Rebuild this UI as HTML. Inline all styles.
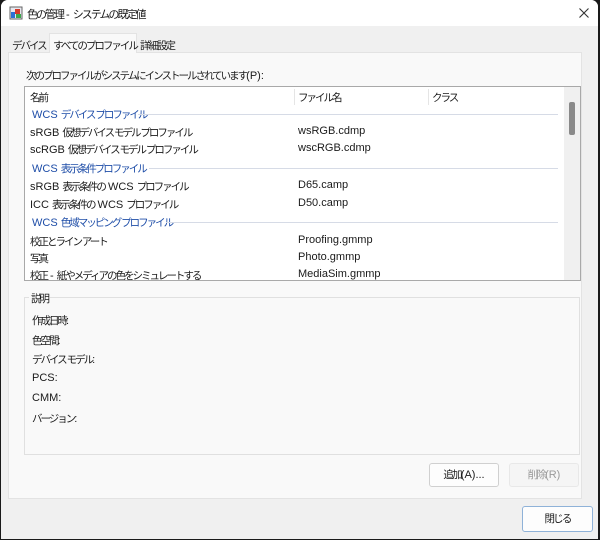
<!DOCTYPE html><html><head><meta charset="utf-8"><style>
*{box-sizing:border-box;margin:0;padding:0}
body{width:600px;height:540px;overflow:hidden;background:#1a1a1a;font-family:"Liberation Sans","Noto Sans CJK JP",sans-serif;font-size:11px;color:#1a1a1a}
.win{position:absolute;left:1px;top:0;width:597px;height:539px;background:#f0f0f0;border-radius:7px 7px 0 0;overflow:hidden}
.title{position:absolute;left:0;top:0;width:100%;height:26px;background:#fff}
.abs{position:absolute;white-space:nowrap;letter-spacing:-2px;font-size:10.5px}
.abs i{font-style:normal;letter-spacing:0;font-size:11px}
.panel{position:absolute;left:7px;top:52px;width:574px;height:447px;background:#f9f9f9;border:1px solid #e3e3e3}
.list{position:absolute;left:23px;top:86px;width:557px;height:195px;background:#fff;border:1px solid #a9a9a9;overflow:hidden}
.grp{color:#1f4ea8}
.line{position:absolute;height:1px;background:#d6dbe6}
.btn{position:absolute;background:#fdfdfd;border:1px solid #d0d0d0;border-radius:3px;text-align:center;line-height:22px;letter-spacing:-1.8px;font-size:10.5px}
.btn i{font-style:normal;letter-spacing:0;font-size:11px}
</style></head><body><div class="win">
<div class="title">
<svg style="position:absolute;left:8px;top:6px" width="14" height="14"><rect x="1" y="1" width="12" height="12" fill="#e8e8f0" stroke="#666"/><rect x="2" y="6" width="4" height="6" fill="#2a6fd6"/><rect x="6" y="3" width="5" height="5" fill="#d63a2a"/><rect x="7" y="8" width="5" height="4" fill="#3aa84a"/></svg>
<div class="abs" style="left:26px;top:6px;font-size:11px">色の管理<i> - </i>システムの既定値</div>
<svg style="position:absolute;left:578px;top:8px" width="10" height="10"><path d="M0.5 0.5L9.5 9.5M9.5 0.5L0.5 9.5" stroke="#333" stroke-width="1.1"/></svg>
</div>
<div class="abs" style="left:11px;top:38px">デバイス</div>
<div class="abs" style="left:48px;top:33px;width:88px;height:20px;background:#f9f9f9;border:1px solid #e3e3e3;border-bottom:none;z-index:2"></div>
<div class="panel"></div>
<div class="abs" style="left:52px;top:38px;z-index:3">すべてのプロファイル</div>
<div class="abs" style="left:139px;top:38px">詳細設定</div>
<div class="abs" style="left:25px;top:68px">次のプロファイルがシステムにインストールされています<i>(P):</i></div>
<div class="list">
<div class="abs" style="left:5px;top:3px">名前</div>
<div class="abs" style="left:269px;top:2px;width:1px;height:16px;background:#e5e5e5"></div>
<div class="abs" style="left:273px;top:3px">ファイル名</div>
<div class="abs" style="left:403px;top:2px;width:1px;height:16px;background:#e5e5e5"></div>
<div class="abs" style="left:407px;top:3px">クラス</div>
<div class="abs grp" style="left:7px;top:20px"><i>WCS </i>デバイス プロファイル</div><div class="line" style="left:113px;top:27px;width:420px"></div>
<div class="abs" style="left:5px;top:38px"><i>sRGB </i>仮想デバイス モデル プロファイル</div><div class="abs" style="left:273px;top:38px"><i>wsRGB.cdmp</i></div>
<div class="abs" style="left:5px;top:55px"><i>scRGB </i>仮想デバイス モデル プロファイル</div><div class="abs" style="left:273px;top:55px"><i>wscRGB.cdmp</i></div>
<div class="abs grp" style="left:7px;top:74px"><i>WCS </i>表示条件プロファイル</div><div class="line" style="left:124px;top:81px;width:409px"></div>
<div class="abs" style="left:5px;top:92px"><i>sRGB </i>表示条件の<i> WCS </i>プロファイル</div><div class="abs" style="left:273px;top:92px"><i>D65.camp</i></div>
<div class="abs" style="left:5px;top:110px"><i>ICC </i>表示条件の<i> WCS </i>プロファイル</div><div class="abs" style="left:273px;top:110px"><i>D50.camp</i></div>
<div class="abs grp" style="left:7px;top:128px"><i>WCS </i>色域マッピング プロファイル</div><div class="line" style="left:141px;top:135px;width:392px"></div>
<div class="abs" style="left:5px;top:147px">校正とライン アート</div><div class="abs" style="left:273px;top:147px"><i>Proofing.gmmp</i></div>
<div class="abs" style="left:5px;top:164px">写真</div><div class="abs" style="left:273px;top:164px"><i>Photo.gmmp</i></div>
<div class="abs" style="left:5px;top:181px">校正<i> - </i>紙やメディアの色をシミュレートする</div><div class="abs" style="left:273px;top:181px"><i>MediaSim.gmmp</i></div>
<div style="position:absolute;left:539px;top:0;width:17px;height:195px;background:#f0f0f0"></div>
<div style="position:absolute;left:544px;top:15px;width:6px;height:33px;background:#8a8a8a;border-radius:2px"></div>
</div>
<div style="position:absolute;left:23px;top:297px;width:556px;height:158px;border:1px solid #e0e0e0"></div>
<div class="abs" style="left:28px;top:291px;background:#f9f9f9;padding:0 2px">説明</div>
<div class="abs" style="left:31px;top:313px">作成日時<i>:</i></div>
<div class="abs" style="left:31px;top:333px">色空間<i>:</i></div>
<div class="abs" style="left:31px;top:352px">デバイス モデル<i>:</i></div>
<div class="abs" style="left:31px;top:372px"><i>PCS:</i></div>
<div class="abs" style="left:31px;top:392px"><i>CMM:</i></div>
<div class="abs" style="left:31px;top:411px">バージョン<i>:</i></div>
<div class="btn" style="left:428px;top:463px;width:70px;height:24px">追加<i>(A)...</i></div>
<div class="btn" style="left:508px;top:463px;width:70px;height:24px;background:#f5f5f5;border-color:#e8e8e8;color:#9a9a9a">削除<i>(R)</i></div>
<div class="btn" style="left:521px;top:506px;width:71px;height:26px;border:1px solid #8fb2d8;line-height:24px">閉じる</div>
</div></body></html>
